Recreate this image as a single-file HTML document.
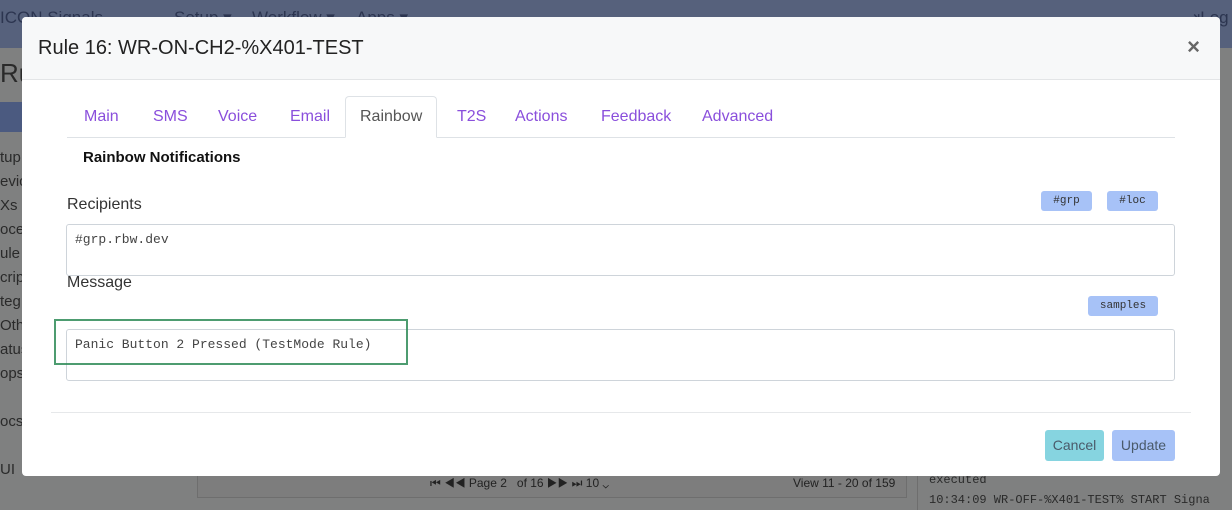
<!DOCTYPE html>
<html><head><meta charset="utf-8"><style>
*{box-sizing:border-box;margin:0;padding:0}
body{width:1232px;height:510px;overflow:hidden;position:relative;background:#7f8080;font-family:"Liberation Sans",sans-serif}
.nav{position:absolute;left:0;top:0;width:1232px;height:48px;background:#56617c;color:#2c3550;font-size:17px}
.bg{position:absolute;color:#2a2a2a;font-size:16px}
.modal{position:absolute;left:22px;top:17px;width:1198px;height:459px;background:#fff;border-radius:4px}
.hdr{height:63px;background:#f7f8f9;border-bottom:1px solid #e3e5e7;border-radius:4px 4px 0 0;position:relative}
.hdr h1{position:absolute;left:16px;top:20px;font-size:20px;font-weight:normal;color:#222}
.x{position:absolute;right:20px;top:17px;font-size:22px;color:#666;font-weight:bold}
.tabs{position:absolute;left:45px;top:80px;width:1108px;height:41px;border-bottom:1px solid #dee2e6}
.tab{position:absolute;top:11px;font-size:16px;color:#8a4fdc}
.tab.act{top:-1px;height:42px;border:1px solid #dee2e6;border-bottom:1px solid #fff;border-radius:4px 4px 0 0;background:#fff;color:#555;padding:11px 14px 0}
.lbl{position:absolute;font-size:16px;color:#333}
.ta{position:absolute;left:44px;width:1109px;height:52px;border:1px solid #ced4da;border-radius:3px;font-family:"Liberation Mono",monospace;font-size:13px;color:#444;padding:7px 8px}
.badge{position:absolute;height:20px;background:#a7c2f7;border-radius:3px;font-family:"Liberation Mono",monospace;font-size:11px;color:#333;text-align:center;line-height:20px}
.btn{position:absolute;top:413px;height:31px;border-radius:3px;font-size:14px;color:#4a5a6a;text-align:center;line-height:31px}
</style></head><body>
<div class="nav"><span style="position:absolute;left:0;top:8px">ICON Signals</span><span style="position:absolute;left:174px;top:8px">Setup ▾</span><span style="position:absolute;left:252px;top:8px">Workflow ▾</span><span style="position:absolute;left:356px;top:8px">Apps ▾</span><span style="position:absolute;left:1186px;top:8px">⇥Log</span></div>
<div class="bg" style="left:0;top:58px;font-size:26px">Ru</div>
<div style="position:absolute;left:0;top:102px;width:22px;height:30px;background:#4b5a80"></div>
<div class="bg" style="left:0;top:146px;line-height:24px;font-size:15px">tup<br>evic<br>Xs<br>oce<br>ule<br>crip<br>teg<br>Oth<br>atus<br>ops<br><br>ocs<br><br>UI</div>
<div style="position:absolute;left:197px;top:476px;width:710px;height:22px;border:1px solid #6e6e6e;border-top:none;background:#7d7d7d;font-size:12px;color:#222"><span style="position:absolute;left:232px;top:0">⏮ ◀◀ Page 2 &nbsp; of 16 ▶▶ ⏭ 10 ⌄</span><span style="position:absolute;left:595px;top:0">View 11 - 20 of 159</span></div>
<div style="position:absolute;left:917px;top:48px;width:315px;height:462px;border-left:1px solid #6e6e6e;background:#7f8080"></div>
<div class="bg" style="left:929px;top:470px;font-family:'Liberation Mono',monospace;font-size:12px;line-height:20px">executed<br>10:34:09 WR-OFF-%X401-TEST% START Signa</div>
<div class="modal">
<div class="hdr"><h1>Rule 16: WR-ON-CH2-%X401-TEST</h1><span class="x">×</span></div>
<div class="tabs">
<span class="tab" style="left:17px">Main</span>
<span class="tab" style="left:86px">SMS</span>
<span class="tab" style="left:151px">Voice</span>
<span class="tab" style="left:223px">Email</span>
<span class="tab act" style="left:278px">Rainbow</span>
<span class="tab" style="left:390px">T2S</span>
<span class="tab" style="left:448px">Actions</span>
<span class="tab" style="left:534px">Feedback</span>
<span class="tab" style="left:635px">Advanced</span>
</div>
<div class="lbl" style="left:61px;top:132px;font-weight:bold;font-size:15px;color:#111">Rainbow Notifications</div>
<div class="lbl" style="left:45px;top:179px">Recipients</div>
<div class="badge" style="left:1019px;top:174px;width:51px">#grp</div>
<div class="badge" style="left:1085px;top:174px;width:51px">#loc</div>
<div class="ta" style="top:207px">#grp.rbw.dev</div>
<div class="lbl" style="left:45px;top:257px">Message</div>
<div class="badge" style="left:1066px;top:279px;width:70px">samples</div>
<div class="ta" style="top:312px">Panic Button 2 Pressed (TestMode Rule)</div>
<div style="position:absolute;left:32px;top:302px;width:354px;height:46px;border:2px solid #2e8b57;opacity:.85"></div>
<div style="position:absolute;left:29px;top:395px;width:1140px;border-top:1px solid #e6e8ea"></div>
<div class="btn" style="left:1023px;width:59px;background:#86d4e0">Cancel</div>
<div class="btn" style="left:1090px;width:63px;background:#a7c2f7">Update</div>
</div>
</body></html>
